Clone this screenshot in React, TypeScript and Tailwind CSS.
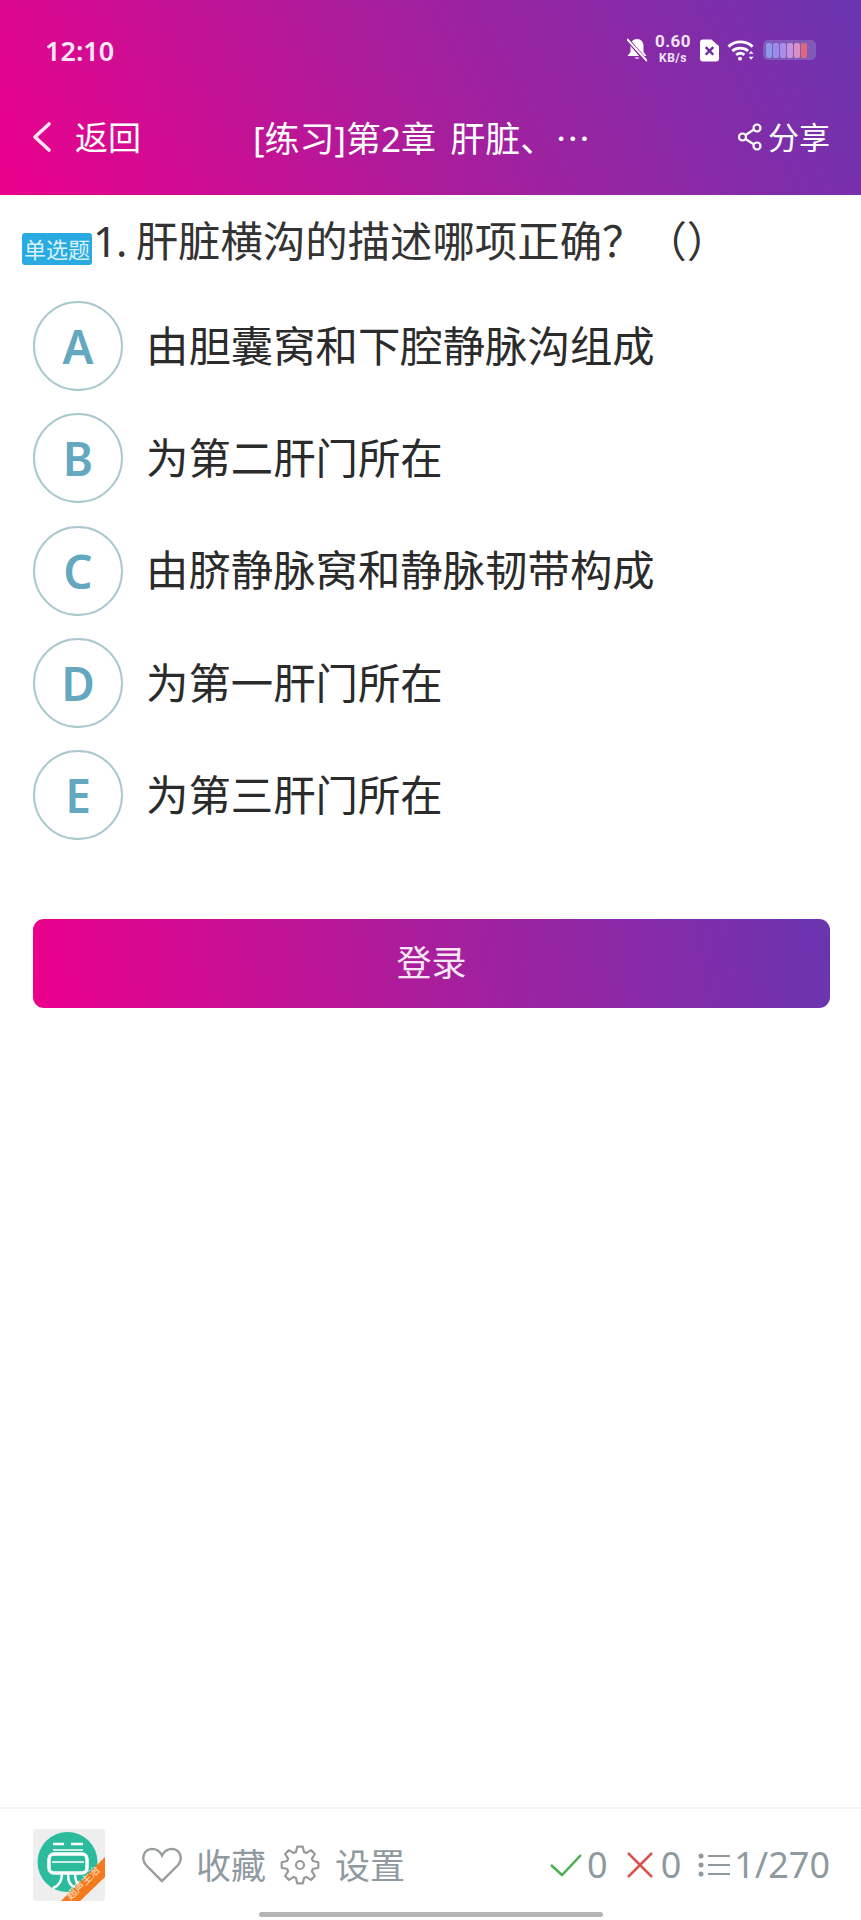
const options = [
  { key: "A", text: "由胆囊窝和下腔静脉沟组成" },
  { key: "B", text: "为第二肝门所在" },
  { key: "C", text: "由脐静脉窝和静脉韧带构成" },
  { key: "D", text: "为第一肝门所在" },
  { key: "E", text: "为第三肝门所在" },
];

// 8 tooth cog outline for the settings icon
function gearPath() {
  const pts: string[] = [];
  for (let i = 0; i < 8; i++) {
    const a = (i * Math.PI) / 4 - Math.PI / 2;
    const steps: [number, number][] = [
      [-0.3, 13.5],
      [-0.15, 18.5],
      [0.15, 18.5],
      [0.3, 13.5],
    ];
    steps.forEach(([d, r]) => {
      const x = 20 + r * Math.cos(a + d);
      const y = 20 + r * Math.sin(a + d);
      pts.push(`${x.toFixed(1)} ${y.toFixed(1)}`);
    });
  }
  return `M${pts.join("L")}z`;
}

function BellOff() {
  return (
    <svg width="20" height="24" viewBox="0 0 20 24" fill="none">
      <path d="M10 1c4 0 6.5 3 6.5 7v6l3 4H.5l3-4V8C3.500 4 6 1 10 1z" fill="#fff" />
      <path d="M7.500 19.500a2.800 2.500 0 0 0 5 0z" fill="#fff" />
      <path d="M0 1l20 23" stroke="#8a22a0" strokeWidth="4" />
      <path d="M0 1l20 22" stroke="#fff" strokeWidth="2" />
    </svg>
  );
}

function SimX() {
  return (
    <svg width="19" height="23" viewBox="0 0 20 23">
      <path d="M3 0h9l8 7v13a3 3 0 0 1-3 3H3a3 3 0 0 1-3-3V3a3 3 0 0 1 3-3z" fill="#fff" />
      <path d="M6 8l8 8M14 8l-8 8" stroke="#6d2a9f" strokeWidth="2.5" />
    </svg>
  );
}

function Wifi() {
  return (
    <svg width="27" height="22" viewBox="0 0 28 22" fill="none" stroke="#fff" strokeWidth="3">
      <path d="M1.500 7.500c7-6.500 18-6.500 25 0" />
      <path d="M5.500 12c4.500-4 12-4 16.500 0" />
      <path d="M9.500 16c2.500-2 6-2 8.500 0" />
      <circle cx="13.5" cy="20" r="2" fill="#fff" stroke="none" />
      <path d="M25 12l2.500 3h-5zM25 21l2.500-3h-5z" fill="#fff" stroke="none" />
    </svg>
  );
}

function Battery() {
  const bars = ["#8f9be8", "#9a8ce8", "#a98fe6", "#c793dc", "#d98fc0", "#e0687c"];
  return (
    <div className="flex h-[20px] w-[53px] items-center gap-[1px] rounded-[5px] bg-[#8a74c2]/60 px-[3px] blur-[0.6px]">
      {bars.map((c, i) => (
        <div key={i} className="h-[15px] w-[6px] rounded-[2px]" style={{ backgroundColor: c }} />
      ))}
    </div>
  );
}

function Share() {
  return (
    <svg width="24" height="30" viewBox="0 0 24 30" fill="none" stroke="#fff" strokeWidth="2.2">
      <circle cx="19" cy="6" r="3.500" />
      <circle cx="4.500" cy="15" r="3.500" />
      <circle cx="19" cy="24" r="3.500" />
      <path d="M7.500 13l8.500-5.500M7.500 17l8.500 5.500" />
    </svg>
  );
}

function Logo() {
  return (
    <div className="h-[72px] w-[72px] shrink-0 overflow-hidden rounded-[3px] bg-[#eeeeee]">
      <svg width="72" height="72" viewBox="0 0 72 72" fill="none">
        <circle cx="34.5" cy="33" r="30" fill="#2dbb9e" />
        <path d="M20 15h11M38 15h12" stroke="#fff" strokeWidth="2.5" />
        <path d="M20 21h30" stroke="#fff" strokeWidth="1.5" />
        <rect x="16" y="25" width="38" height="19" rx="5" stroke="#fff" strokeWidth="3.5" />
        <path d="M19 33h32" stroke="#fff" strokeWidth="1.5" />
        <path d="M29 44c0 9-3 13-9 15M35 45c0 8 2 12 7 13M42 45c0 6 1 9 5 11" stroke="#fff" strokeWidth="2.5" />
        <path d="M72 28v20L47 72H28z" fill="#f4791f" />
        <text
          transform="translate(52.5 56.5) rotate(-45)"
          textAnchor="middle"
          fontSize="10.5"
          fill="#ffe2c9"
          fontFamily="'Noto Sans CJK SC', sans-serif"
        >
          超声主治
        </text>
      </svg>
    </div>
  );
}

export default function App() {
  return (
    <div className="flex h-[1920px] w-[861px] flex-col overflow-hidden bg-white font-['Noto_Sans','Noto_Sans_CJK_SC',sans-serif]">
      <header className="h-[195px] shrink-0 bg-[linear-gradient(62deg,#ec008c_0%,#a81e9c_48%,#6a35b0_100%)] text-white">
        <div className="flex h-[100px] items-center justify-between pl-[45px] pr-[45px]">
          <span className="text-[27px] font-semibold leading-none text-[#fbe6f5]">12:10</span>
          <div className="flex items-center">
            <BellOff />
            <div className="ml-[7px] flex w-[38px] flex-col items-center font-['Roboto',sans-serif] text-[#f3e4f7]">
              <span className="text-[17px] font-bold leading-[17px] tracking-[0.5px]">0.60</span>
              <span className="text-[12px] font-bold leading-[17px] tracking-[0.5px]">KB/s</span>
            </div>
            <div className="ml-[8px] flex items-center">
              <SimX />
            </div>
            <div className="ml-[8px] flex items-center">
              <Wifi />
            </div>
            <div className="ml-[9px]">
              <Battery />
            </div>
          </div>
        </div>
        <nav className="flex h-[74px] items-center pl-[31px] pr-[31px]">
          <svg width="22" height="32" viewBox="0 0 22 32" fill="none" stroke="#fbe6f5" strokeWidth="3.6" strokeLinecap="round" strokeLinejoin="round">
            <path d="M18 3L4 16l14 13" />
          </svg>
          <span className="ml-[22px] text-[33px] leading-none">返回</span>
          <span className="ml-[112px] text-[35px] leading-none [word-spacing:5px]">
            [练习]第2章 肝脏、<span className="font-['Noto_Sans_CJK_SC',sans-serif]">⋯</span>
          </span>
          <div className="ml-auto flex items-center gap-[6px]">
            <Share />
            <span className="text-[31px] leading-none">分享</span>
          </div>
        </nav>
      </header>

      <main className="flex-1 px-[33px]">
        <div className="-ml-[11px] mt-[25px] flex items-start">
          <span className="mt-[13px] flex h-[32px] w-[70px] items-center justify-center rounded-[3px] bg-[#29abe2] text-[22px] leading-none text-[#d9f1fb]">
            单选题
          </span>
          <span className="ml-[1px] text-[42.4px] leading-[42px] text-[#333333]">
            <span className="tracking-[-1.3px]">1. </span>肝脏横沟的描述哪项正确？（）
          </span>
        </div>

        <ul className="mt-[36px] flex flex-col gap-[22.25px]">
          {options.map((o) => (
            <li key={o.key} className="flex items-center">
              <div className="flex h-[90px] w-[90px] items-center justify-center rounded-full border-2 border-[#a9c9cf] text-[46px] font-semibold leading-none text-[#63a8bf]">
                {o.key}
              </div>
              <span className="ml-[23px] text-[42.4px] leading-none text-[#2b2b2b]">{o.text}</span>
            </li>
          ))}
        </ul>

        <button className="mt-[79px] flex h-[89px] w-[797px] items-center justify-center rounded-[11px] bg-[linear-gradient(80deg,#ec008c_0%,#a81e9c_50%,#6a35b0_100%)] text-[35px] text-[#fbe6f5]">
          登录
        </button>
      </main>

      <footer className="h-[113px] shrink-0 border-t-2 border-[#f3f4f5]">
        <div className="flex h-[94px] items-center pl-[33px] pr-[31px] pt-[18px] text-[35px] leading-none text-[#8e9a9f]">
          <Logo />
          <svg className="ml-[35px]" width="44" height="36" viewBox="0 0 44 38" fill="none" stroke="#979b9d" strokeWidth="2.5">
            <path d="M22 36L5 19C0 13 2 3 11 2c5 0 9 3 11 7 2-4 6-7 11-7 9 1 11 11 6 17z" />
          </svg>
          <span className="ml-[12px]">收藏</span>
          <svg className="ml-[14px]" width="40" height="40" viewBox="0 0 40 40" fill="none" stroke="#979b9d" strokeWidth="2.2" strokeLinejoin="round">
            <path d={gearPath()} />
            <circle cx="20" cy="20" r="4" />
          </svg>
          <span className="ml-[15px]">设置</span>
          <div className="ml-auto flex items-center text-[36px]">
            <svg width="32" height="24" viewBox="0 0 32 24" fill="none" stroke="#4caf50" strokeWidth="2.5">
              <path d="M1 12l11 10L31 2" />
            </svg>
            <span className="ml-[5px]">0</span>
            <svg className="ml-[19px]" width="26" height="26" viewBox="0 0 26 26" fill="none" stroke="#d9534f" strokeWidth="2.5">
              <path d="M1 1l24 24M25 1L1 25" />
            </svg>
            <span className="ml-[8px]">0</span>
            <svg className="ml-[17px]" width="32" height="24" viewBox="0 0 32 24" fill="#8e9a9f">
              <circle cx="3" cy="3" r="2.5" />
              <circle cx="3" cy="12" r="2.5" />
              <circle cx="3" cy="21" r="2.5" />
              <rect x="10" y="2" width="22" height="2" />
              <rect x="10" y="11" width="22" height="2" />
              <rect x="10" y="20" width="22" height="2" />
            </svg>
            <span className="ml-[4px]">1/270</span>
          </div>
        </div>
        <div className="mx-auto mt-[9px] h-[5px] w-[344px] rounded-full bg-[#b5b5b5]" />
      </footer>
    </div>
  );
}
